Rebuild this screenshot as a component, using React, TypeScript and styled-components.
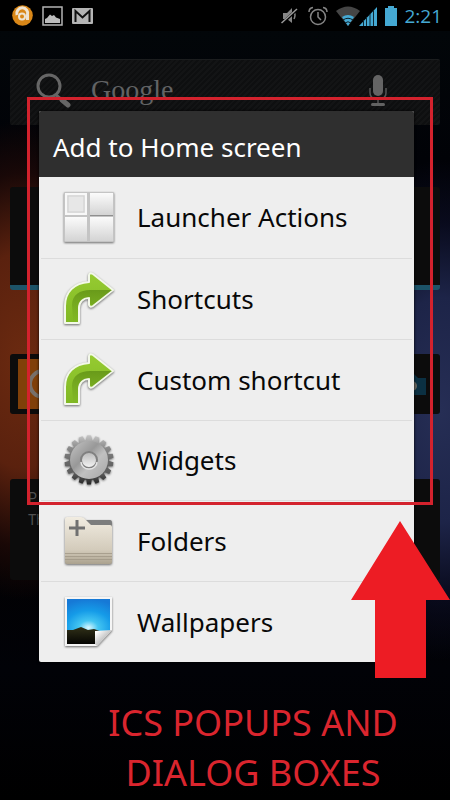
import React from 'react';
import styled, { createGlobalStyle } from 'styled-components';

const GlobalStyle = createGlobalStyle`
  * { box-sizing: border-box; }
  body { margin: 0; background: #000; }
  button { font: inherit; color: inherit; border: 0; padding: 0; background: none; cursor: pointer; }
  svg { display: block; flex: none; }
`;

const Screen = styled.main`
  position: relative;
  min-height: 100vh;
  overflow: hidden;
  display: flex;
  flex-direction: column;
  font-family: 'Noto Sans', 'Open Sans', sans-serif;
  background:
    radial-gradient(ellipse 130px 240px at 5% 360px, #6b2a10 0%, #5a210e 45%, rgba(40, 12, 8, 0.6) 78%, transparent 100%),
    radial-gradient(ellipse 130px 250px at 98% 410px, #262e55 0%, #1d2448 45%, rgba(12, 14, 38, 0.7) 75%, transparent 100%),
    linear-gradient(#020609 30px, #010207 160px, #020103 560px, #010207 670px, #000 800px);
`;

const StatusBar = styled.header`
  height: 31px;
  padding: 0 8px 0 12px;
  display: flex;
  align-items: center;
  justify-content: space-between;
  background: #000;
`;

const StatusGroup = styled.div<{ $gap: number }>`
  display: flex;
  align-items: center;
  gap: ${(p) => p.$gap}px;
`;

const Clock = styled.time`
  font: 400 19px/30px 'Open Sans', sans-serif;
  color: #45a9d3;
`;

const Home = styled.div`
  padding: 28px 10px 0;
  display: flex;
  flex-direction: column;
`;

const SearchBar = styled.button`
  && {
    height: 66px;
    padding: 0 52px 6px 26px;
    display: flex;
    align-items: center;
    border-radius: 2px;
    border-top: 1px solid #1b1d1e;
    background: repeating-linear-gradient(135deg, #0e0f10 0 2px, #131415 2px 4px);
  }
`;

const Brand = styled.span`
  flex: 1;
  margin-left: 19px;
  text-align: left;
  font: 28px/36px 'Liberation Serif', serif;
  color: #626364;
`;

const Widget = styled.section<{ $top: number; $height: number; $accent?: boolean }>`
  margin-top: ${(p) => p.$top}px;
  height: ${(p) => p.$height}px;
  display: flex;
  align-items: center;
  justify-content: space-between;
  border-radius: 3px;
  border-bottom: ${(p) => (p.$accent ? '5px solid #1c5368' : '0')};
  background: #0c0c0c;
  overflow: hidden;
`;

const Note = styled.p`
  align-self: flex-start;
  margin: 8px 0 0 18px;
  font: 14px/22px Roboto, sans-serif;
  color: #505050;
`;

const Dialog = styled.section`
  position: absolute;
  top: 111px;
  left: 39px;
  right: 36px;
  border-radius: 2px;
  overflow: hidden;
  background: #eee;
  box-shadow: 0 0 3px #000;
`;

const DialogTitle = styled.h1`
  margin: 0;
  height: 66px;
  padding: 0 14px;
  font-size: 26px;
  line-height: 72px;
  font-weight: 400;
  white-space: nowrap;
  color: #fff;
  background: #2f2f2f;
`;

const List = styled.ul`
  margin: 0;
  padding: 0 2px;
  height: 485px;
  list-style: none;
  display: grid;
  grid-template-rows: repeat(6, 1fr);
`;

const Item = styled.li`
  display: flex;
  & + & { border-top: 1px solid #dcdcdc; }
`;

const ItemButton = styled.button`
  && {
    flex: 1;
    display: flex;
    align-items: center;
    gap: 18px;
    padding-left: 18px;
    font-size: 26px;
    line-height: 36px;
    text-align: left;
    white-space: nowrap;
    color: #080808;
  }
`;

const Highlight = styled.div`
  position: absolute;
  top: 97px;
  left: 27px;
  right: 17px;
  height: 408px;
  border: 3px solid #d3222d;
  pointer-events: none;
`;

const Pointer = styled.svg`
  position: absolute;
  top: 520px;
  right: 0;
`;

const Caption = styled.p`
  margin: 118px 0 0 56px;
  text-align: center;
  font-size: 36px;
  line-height: 50px;
  font-weight: 400;
  color: #da252e;
`;

const IconSvg = styled.svg.attrs({ width: 60, height: 60, viewBox: '0 0 60 60', 'aria-hidden': true })`
  filter: drop-shadow(0 1px 1px rgba(0, 0, 0, 0.55));
`;

const LauncherIcon = () => (
  <IconSvg>
    <defs>
      <linearGradient id="tile" x1="0" y1="0" x2="0" y2="1">
        <stop offset="0" stopColor="#fbfbfb" />
        <stop offset="1" stopColor="#d4d4d4" />
      </linearGradient>
    </defs>
    <rect x="5" y="5" width="50" height="50" rx="1" fill="#c4c4c4" />
    <rect x="7" y="7" width="20" height="20" fill="#e7e7e7" stroke="#f8f8f8" strokeWidth="2" />
    <rect x="9" y="9" width="16" height="16" fill="none" stroke="#cfcfcf" />
    <rect x="31" y="6" width="23" height="22" fill="url(#tile)" />
    <path d="M31 28.500h23" stroke="#8f8f8f" />
    <rect x="6" y="30" width="22" height="24" fill="url(#tile)" />
    <rect x="31" y="30" width="23" height="24" fill="url(#tile)" />
  </IconSvg>
);

const ShortcutIcon = () => (
  <IconSvg>
    <defs>
      <linearGradient id="leaf" x1="0" y1="0" x2="0" y2="1">
        <stop offset="0" stopColor="#96cb32" />
        <stop offset="1" stopColor="#80b822" />
      </linearGradient>
      <linearGradient id="leafShade" x1="0" y1="0" x2="0" y2="1">
        <stop offset="0" stopColor="#5c8c14" stopOpacity="0.75" />
        <stop offset="1" stopColor="#5c8c14" stopOpacity="0" />
      </linearGradient>
    </defs>
    <path
      d="M6 54V37C6 23 15 14 30 13V6Q31 3 34 5L54 21L34 37Q31 39 30 36V29C24 29 20 33 20 39V54Z"
      fill="url(#leaf)" stroke="#f3f8e9" strokeWidth="2" strokeLinejoin="round"
    />
    <path d="M13 36C13 26 21 21 31 21H53L33 36.500L31 35V28C24 28 19 32 19 39V53H14Z" fill="url(#leafShade)" />
  </IconSvg>
);

const teeth = Array.from({ length: 18 }, (_, i) => i * 20);

const GearIcon = () => (
  <IconSvg>
    <defs>
      <linearGradient id="steel" x1="0" y1="0" x2="0" y2="60" gradientUnits="userSpaceOnUse">
        <stop offset="0.08" stopColor="#c8c8c8" />
        <stop offset="0.3" stopColor="#8a8a8a" />
        <stop offset="0.5" stopColor="#6a6a6a" />
        <stop offset="0.72" stopColor="#5c5c5c" />
        <stop offset="0.92" stopColor="#222" />
      </linearGradient>
      <linearGradient id="disc" x1="0" y1="0" x2="1" y2="1">
        <stop offset="0" stopColor="#c6c6c6" />
        <stop offset="0.4" stopColor="#989898" />
        <stop offset="0.6" stopColor="#c0c0c0" />
        <stop offset="1" stopColor="#a6a6a6" />
      </linearGradient>
      <linearGradient id="hole" x1="0" y1="0" x2="0" y2="1">
        <stop offset="0" stopColor="#b8b8b8" />
        <stop offset="1" stopColor="#f6f6f6" />
      </linearGradient>
      <mask id="teeth" maskUnits="userSpaceOnUse" x="0" y="0" width="60" height="60">
        <circle cx="30" cy="30" r="20" fill="#fff" />
        {teeth.map((a) => (
          <path key={a} d="M27 12L28 5.500h4L33 12Z" fill="#fff" transform={`rotate(${a} 30 30)`} />
        ))}
      </mask>
    </defs>
    <rect width="60" height="60" fill="url(#steel)" mask="url(#teeth)" />
    <circle cx="30" cy="30" r="19" fill="url(#disc)" />
    <circle cx="30" cy="30" r="8" fill="url(#hole)" stroke="#808080" strokeWidth="2" />
    <path d="M22 32a8 7 0 0 0 16 0" fill="none" stroke="#e4e4e4" strokeWidth="1.500" />
  </IconSvg>
);

const FolderIcon = () => (
  <IconSvg>
    <defs>
      <linearGradient id="folder" x1="0" y1="0" x2="0" y2="1">
        <stop offset="0" stopColor="#f1ece1" />
        <stop offset="0.7" stopColor="#d3cbbb" />
        <stop offset="1" stopColor="#aba28f" />
      </linearGradient>
    </defs>
    <path d="M25 9H51Q53 9 53 12V24H25Z" fill="#7c7d7d" />
    <path d="M8 6H22Q25 6 27 9L32 14H51Q53 14 53 16V51Q53 53 51 53H8Q6 53 6 51V8Q6 6 8 6Z" fill="url(#folder)" />
    <path d="M6 42.500H53M6 45.500H53M6 48.500H53" stroke="#9f9685" opacity=".75" />
    <path d="M18 9V25M10 17H26" stroke="#707070" strokeWidth="3" />
  </IconSvg>
);

const WallpaperIcon = () => (
  <IconSvg>
    <defs>
      <radialGradient id="sky" cx="0.5" cy="0.9" r="0.9">
        <stop offset="0" stopColor="#dcf8ff" />
        <stop offset="0.25" stopColor="#43c5f2" />
        <stop offset="0.6" stopColor="#159be8" />
        <stop offset="1" stopColor="#1679d6" />
      </radialGradient>
      <linearGradient id="ground" x1="0" y1="0" x2="0" y2="1">
        <stop offset="0" stopColor="#303018" />
        <stop offset="1" stopColor="#050502" />
      </linearGradient>
      <linearGradient id="curl" x1="0" y1="0" x2="1" y2="1">
        <stop offset="0.1" stopColor="#fff" />
        <stop offset="0.5" stopColor="#c9c9c9" />
      </linearGradient>
    </defs>
    <path d="M6 5H53V38L38 54H6Z" fill="#f5f5f5" />
    <path d="M8 7H51V39H8Z" fill="url(#sky)" />
    <path d="M8 38L14 38L22 35L29 38L35 37L41 39L49 40L36 52H8Z" fill="url(#ground)" />
    <path d="M36 39L53 38L38 54L36 52Z" fill="url(#curl)" />
  </IconSvg>
);

const items = [
  { label: 'Launcher Actions', Icon: LauncherIcon },
  { label: 'Shortcuts', Icon: ShortcutIcon },
  { label: 'Custom shortcut', Icon: ShortcutIcon },
  { label: 'Widgets', Icon: GearIcon },
  { label: 'Folders', Icon: FolderIcon },
  { label: 'Wallpapers', Icon: WallpaperIcon },
];

const NotificationIcons = () => (
  <StatusGroup $gap={9}>
    <svg width="21" height="21" viewBox="0 0 21 21" aria-hidden>
      <circle cx="10.500" cy="10.500" r="10.300" fill="#d98718" />
      <path d="M5 10A5.500 5.500 0 1 1 15.500 10V15" fill="none" stroke="#eee3d2" strokeWidth="3" />
      <circle cx="10" cy="11.500" r="3" fill="none" stroke="#eee3d2" strokeWidth="2" />
    </svg>
    <svg width="21" height="20" viewBox="0 0 21 20" aria-hidden>
      <rect x="1" y="1" width="19" height="18" fill="none" stroke="#b4b4b4" strokeWidth="1.500" />
      <path d="M3 17V13L5 12L8 8.500L10 10L12 9L14 11.500L18 13V17Z" fill="#bcbcbc" />
    </svg>
    <svg width="21" height="16" viewBox="0 0 21 16" aria-hidden>
      <rect width="21" height="16" rx="1" fill="#b5b5b5" />
      <path d="M3.500 14V3L10.500 9.500L17.500 3V14" fill="none" stroke="#111" strokeWidth="2" />
    </svg>
  </StatusGroup>
);

const SystemIcons = () => (
  <StatusGroup $gap={4}>
    <svg width="20" height="20" viewBox="0 0 20 20" aria-hidden>
      <path d="M3 7H7L12 2V17L7 13H3Z" fill="#858585" />
      <path d="M14 6Q16 9 14 13" fill="none" stroke="#858585" strokeWidth="1.500" />
      <path d="M1.500 18L17.500 3" stroke="#000" strokeWidth="3" />
      <path d="M1.500 17L17 3" stroke="#999" strokeWidth="1.500" />
    </svg>
    <svg width="28" height="20" viewBox="0 0 28 20" aria-hidden>
      <g fill="none" stroke="#858585" strokeWidth="1.500">
        <circle cx="14" cy="11" r="7.500" />
        <path d="M14 6V11L17 14M5 6Q5 2 9 1.500M23 6Q23 2 19 1.500" />
      </g>
    </svg>
    <svg width="42" height="20" viewBox="0 0 42 20" aria-hidden>
      <path d="M0 5Q12 -4 24 5L12 20Z" fill="#454545" />
      <path d="M6 11Q12 7 18 11L12 20Z" fill="#45a9d3" />
      <path d="M7 14Q12 10.500 17 14M9 17Q12 14.500 15 17" fill="none" stroke="#0c1c24" />
      <path d="M41 1V20H23Z" fill="#45a9d3" />
      <path d="M27.500 14V20M30.500 11V20M34 8V20M37.500 4V20" stroke="#0d2733" />
    </svg>
    <svg width="18" height="20" viewBox="0 0 18 20" aria-hidden>
      <path d="M3 2H6V0H12V2H15V20H3Z" fill="#45a9d3" />
    </svg>
    <Clock>2:21</Clock>
  </StatusGroup>
);

export default function App() {
  return (
    <>
      <GlobalStyle />
      <Screen>
        <StatusBar>
          <NotificationIcons />
          <SystemIcons />
        </StatusBar>
        <Home>
          <SearchBar aria-label="Google search">
            <svg width="36" height="36" viewBox="0 0 36 36" aria-hidden>
              <circle cx="13" cy="14" r="11" fill="none" stroke="#666" strokeWidth="3" />
              <path d="M20 23L26 28" stroke="#666" strokeWidth="3" />
              <path d="M26 28L32 33" stroke="#666" strokeWidth="5" strokeLinecap="round" />
            </svg>
            <Brand>Google</Brand>
            <svg width="20" height="34" viewBox="0 0 20 34" aria-hidden>
              <rect x="5" y="2" width="10" height="21" rx="5" fill="#646464" />
              <path d="M2 15V20Q2 26 10 26Q18 26 18 20V15M10 26V31" fill="none" stroke="#555" strokeWidth="1.500" />
              <rect x="3" y="30" width="14" height="3" rx="1.500" fill="#626262" />
            </svg>
          </SearchBar>
          <Widget $top={62} $height={103} $accent />
          <Widget $top={64} $height={60}>
            <svg width="40" height="60" viewBox="0 0 40 60" aria-hidden>
              <path d="M8 5H40V55H8Z" fill="#804009" />
              <circle cx="33" cy="30" r="13" fill="none" stroke="#777069" strokeWidth="4" />
            </svg>
            <svg width="32" height="60" viewBox="0 0 32 60" aria-hidden>
              <path d="M0 20L6 20L10 24H18V41H0Z" fill="#0b3042" />
              <circle cx="4" cy="32" r="5" fill="#6a6962" />
            </svg>
          </Widget>
          <Widget $top={65} $height={101}>
            <Note>P<br />Th</Note>
          </Widget>
        </Home>
        <Caption>ICS POPUPS AND<br />DIALOG BOXES</Caption>

        <Dialog role="dialog" aria-labelledby="dialog-title">
          <DialogTitle id="dialog-title">Add to Home screen</DialogTitle>
          <List>
            {items.map(({ label, Icon }) => (
              <Item key={label}>
                <ItemButton><Icon />{label}</ItemButton>
              </Item>
            ))}
          </List>
        </Dialog>
        <Highlight />
        <Pointer width="100" height="158" viewBox="0 0 100 158" aria-hidden>
          <path d="M50 1L100 80H76V158H25V80H1Z" fill="#ed1c24" />
        </Pointer>
      </Screen>
    </>
  );
}
